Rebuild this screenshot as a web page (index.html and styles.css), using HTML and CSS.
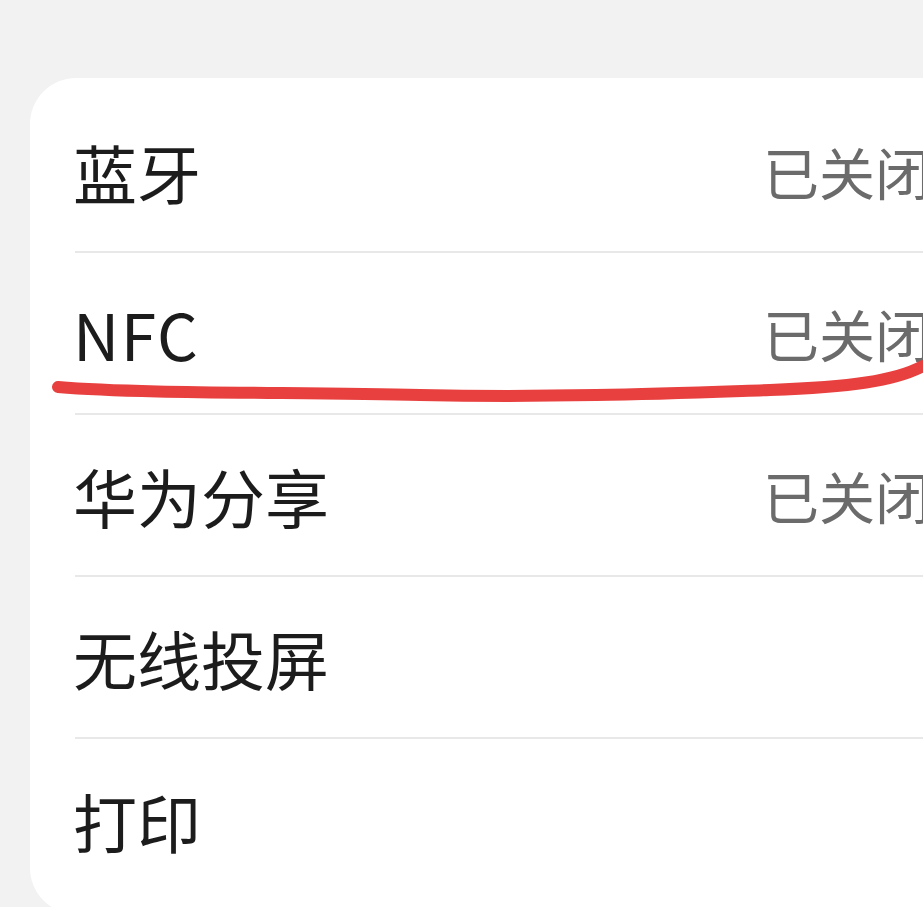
FILE: index.html
```html
<!DOCTYPE html>
<html lang="zh-CN">
<head>
<meta charset="utf-8">
<title>设置</title>
<link rel="stylesheet" href="styles.css">
</head>
<body>
<div class="page">
  <div class="card">
    <div class="row"><div class="inner"><span class="label">蓝牙</span><span class="value">已关闭</span></div></div>
    <div class="row"><div class="inner"><span class="label latin">NFC</span><span class="value">已关闭</span></div></div>
    <div class="row"><div class="inner"><span class="label">华为分享</span><span class="value">已关闭</span></div></div>
    <div class="row"><div class="inner"><span class="label">无线投屏</span></div></div>
    <div class="row last"><div class="inner"><span class="label">打印</span></div></div>
  </div>
  <svg class="mark" width="923" height="907" viewBox="0 0 923 907">
    <path d="M58,387 C140,394 300,392 420,395 C560,398 680,393 770,390 C850,387 895,381 923,366" fill="none" stroke="#e8403f" stroke-width="12" stroke-linecap="round"/>
  </svg>
</div>
</body>
</html>
```
FILE: styles.css
```css
html, body {
  margin: 0;
  padding: 0;
  background: #f2f2f2;
  overflow: hidden;
  width: 923px;
  height: 907px;
}
.page {
  position: relative;
  width: 923px;
  height: 907px;
  overflow: hidden;
  padding-top: 78px;
  padding-left: 30px;
  box-sizing: border-box;
  font-family: "Noto Sans CJK SC", "Noto Sans", sans-serif;
}
.card {
  width: 1000px;
  background: #ffffff;
  border-radius: 46px;
  padding: 13px 0 13px 0;
  box-sizing: border-box;
}
.row {
  height: 162px;
  padding-left: 45px;
  box-sizing: border-box;
}
.inner {
  height: 100%;
  display: flex;
  align-items: center;
  border-bottom: 2px solid #e8e8e8;
  box-sizing: border-box;
}
.row.last .inner {
  border-bottom: none;
}
.label {
  font-size: 64px;
  color: #1c1c1c;
  line-height: 1;
  margin-left: -2px;
  white-space: nowrap;
}
.label.latin {
  letter-spacing: 1.5px;
}
.value {
  margin-left: auto;
  width: 267px;
  font-size: 56px;
  color: #6b6b6b;
  line-height: 1;
  white-space: nowrap;
}
.mark {
  position: absolute;
  left: 0;
  top: 0;
  pointer-events: none;
}
```
